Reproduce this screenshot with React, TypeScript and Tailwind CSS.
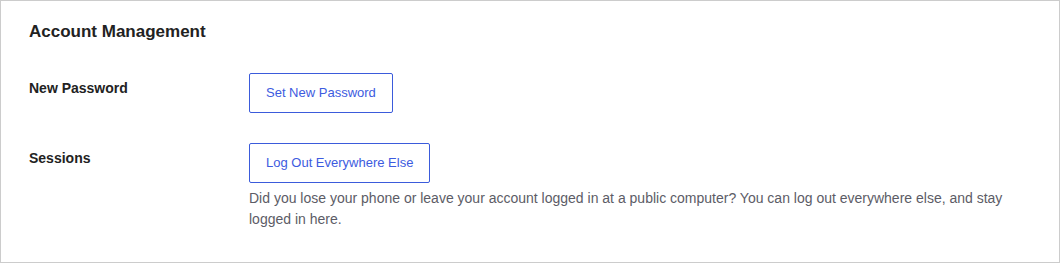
const rows = [
  {
    label: "New Password",
    button: "Set New Password",
  },
  {
    label: "Sessions",
    button: "Log Out Everywhere Else",
    help: "Did you lose your phone or leave your account logged in at a public computer? You can log out everywhere else, and stay logged in here.",
  },
];

const App = () => {
  return (
    <div
      className="w-[1060px] h-[263px] border border-[#cccccc] bg-white px-7 pt-[19px] text-[#222222]"
      style={{ fontFamily: '"Liberation Sans", Arial, sans-serif' }}
    >
      <h2 className="text-[17px] leading-[24px] font-bold">Account Management</h2>
      <div className="mt-[29px] flex flex-col gap-[30px]">
        {rows.map((row) => (
          <div key={row.label} className="flex">
            <div className="w-[220px] shrink-0 pt-[5px] text-[14px] leading-[20px] font-bold">
              {row.label}
            </div>
            <div className="flex-1">
              <button className="h-[40px] px-4 border border-[#3b5bdb] rounded-[2px] bg-white text-[13px] leading-[18px] text-[#3d5be0]">
                {row.button}
              </button>
              {row.help && (
                <p className="mt-[5px] text-[14px] leading-[21px] text-[#5c5c66]">
                  {row.help}
                </p>
              )}
            </div>
          </div>
        ))}
      </div>
    </div>
  );
};

export default App;
